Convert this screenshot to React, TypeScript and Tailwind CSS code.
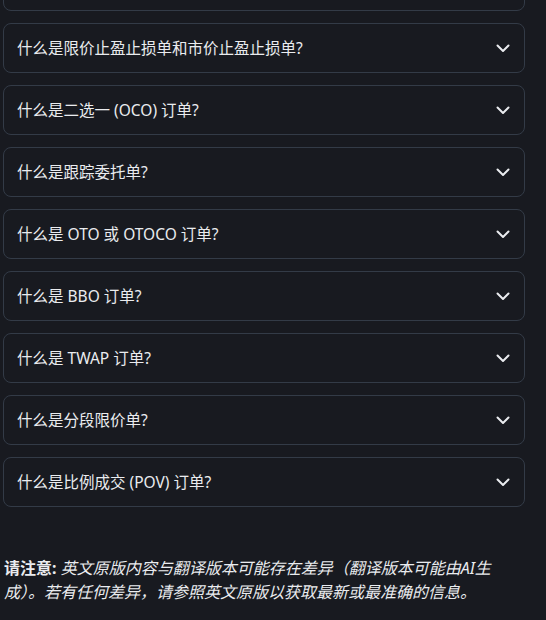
import React from 'react';

const QUESTIONS = [
  '什么是止盈止损单?',
  '什么是限价止盈止损单和市价止盈止损单?',
  '什么是二选一 (OCO) 订单?',
  '什么是跟踪委托单?',
  '什么是 OTO 或 OTOCO 订单?',
  '什么是 BBO 订单?',
  '什么是 TWAP 订单?',
  '什么是分段限价单?',
  '什么是比例成交 (POV) 订单?',
];

function Chevron() {
  return (
    <svg width="16" height="16" viewBox="0 0 16 16" fill="none" className="shrink-0">
      <path d="M2.5 5.5L8 11L13.5 5.5" stroke="#eaecef" strokeWidth="2" strokeLinecap="round" strokeLinejoin="round" />
    </svg>
  );
}

export default function App() {
  return (
    <div
      className="min-h-[620px] w-[546px] overflow-hidden bg-[#181a20] text-[#eaecef]"
      style={{ fontFamily: '"Noto Sans", "Noto Sans CJK SC", sans-serif' }}
    >
      <div className="flex w-[525px] flex-col gap-3 pl-[3px]">
        {QUESTIONS.map((q, i) => (
          <div
            key={q}
            className={`flex h-[50px] items-center justify-between rounded-lg border border-[#333b47] pl-[13px] pr-[13px] ${
              i === 0 ? '-mt-[39px]' : ''
            }`}
          >
            <span className="text-[15.5px] leading-6">{q}</span>
            <Chevron />
          </div>
        ))}
      </div>

      <p className="mt-[49px] w-[500px] pl-[4px] text-[16px] leading-6">
        <span className="font-bold">请注意: </span>
        <span className="italic">
          英文原版内容与翻译版本可能存在差异（翻译版本可能由AI生成）。若有任何差异，请参照英文原版以获取最新或最准确的信息。
        </span>
      </p>
    </div>
  );
}
